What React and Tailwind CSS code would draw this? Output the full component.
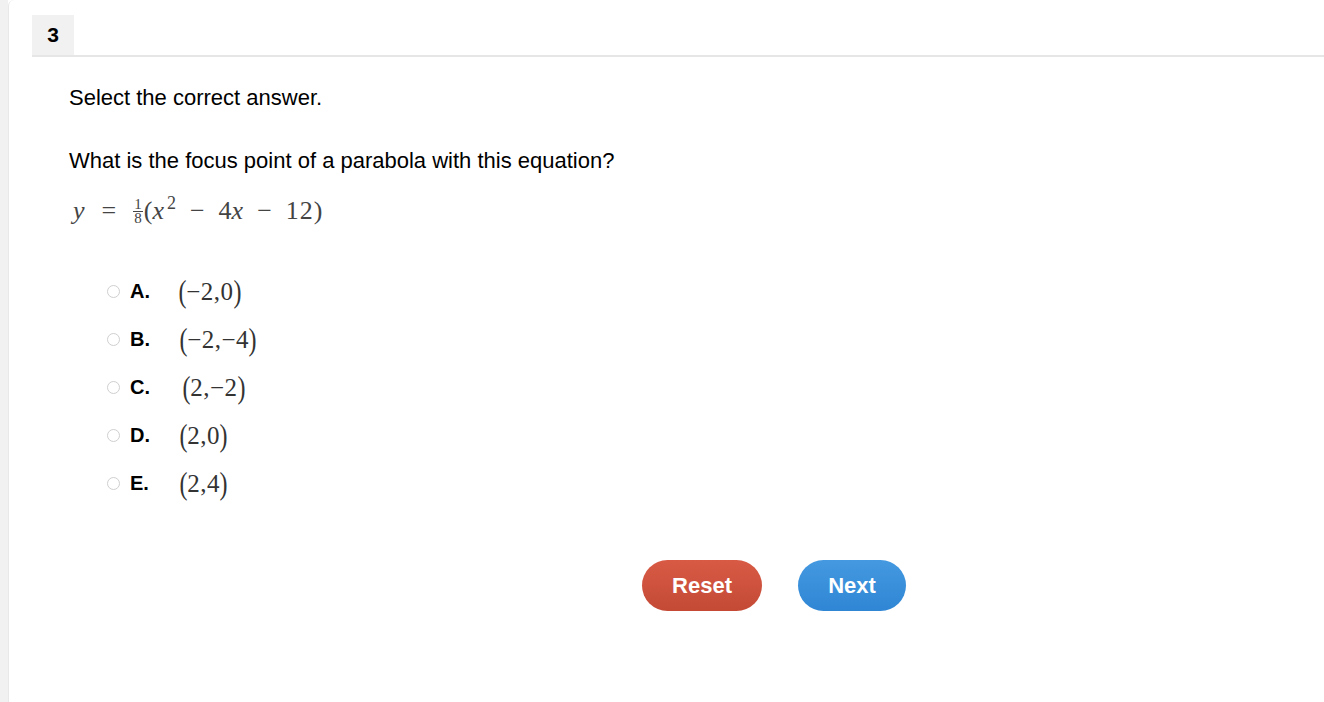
const options = [
    { letter: "A.", value: "(−2,0)", pad: "pl-[27px]" },
    { letter: "B.", value: "(−2,−4)", pad: "pl-[28px]" },
    { letter: "C.", value: "(2,−2)", pad: "pl-[31px]" },
    { letter: "D.", value: "(2,0)", pad: "pl-[28px]" },
    { letter: "E.", value: "(2,4)", pad: "pl-[28px]" },
];

function MathPoint({ value }) {
    // tách ngoặc để vẽ cao hơn chữ số
    const inner = value.slice(1, -1);
    return (
        <span className="flex items-center font-['Liberation_Serif',serif] text-[#333] text-[25px] leading-none tracking-[0.5px]">
            <span className="text-[32px] font-light scale-x-75 -mx-[2px]">(</span>
            <span>{inner}</span>
            <span className="text-[32px] font-light scale-x-75 -mx-[2px]">)</span>
        </span>
    );
}

function Option({ letter, value, pad }) {
    return (
        <label className="flex items-center h-[48px]">
            <span className="w-[13px] h-[13px] rounded-full border border-[#cfcfcf] bg-white" />
            <span className="ml-[10px] w-[22px] font-bold text-[20px] text-black">
                {letter}
            </span>
            <span className={pad}>
                <MathPoint value={value} />
            </span>
        </label>
    );
}

export default function App() {
    return (
        <div className="flex min-h-[702px] bg-white font-['Liberation_Sans',Arial,sans-serif]">
            {/* Thanh xám bên trái */}
            <div className="w-[8px] bg-[#f1f1f1]" />

            <div className="flex-1 bg-white border-l border-[#e8e8e8] rounded-tl-[6px] pt-[15px] pl-[23px]">
                {/* Tab số câu hỏi */}
                <div className="flex border-b-2 border-[#e6e6e6]">
                    <div className="w-[42px] h-[40px] bg-[#f1f1f1] flex items-center justify-center font-bold text-[21px] text-black">
                        3
                    </div>
                </div>

                <div className="pl-[37px] pt-[27px]">
                    <p className="text-[22px] leading-[28px] text-black">
                        Select the correct answer.
                    </p>
                    <p className="mt-[35px] text-[22px] leading-[28px] text-black">
                        What is the focus point of a parabola with this equation?
                    </p>

                    {/* Phương trình */}
                    <div className="mt-[18px] pl-[4px] flex items-center font-['Liberation_Serif',serif] text-[26px] text-[#444] leading-none h-[36px]">
                        <span className="italic">y</span>
                        <span className="mx-[17px]">=</span>
                        <span className="inline-flex flex-col items-center text-[15px] leading-[13px] mr-[1px]">
                            <span>1</span>
                            <span className="border-t border-[#444] px-[1px]">8</span>
                        </span>
                        <span>(</span>
                        <span className="italic">x</span>
                        <span className="text-[18px] self-start mt-[1px] ml-[3px]">2</span>
                        <span className="mx-[14px]">−</span>
                        <span>4</span>
                        <span className="italic">x</span>
                        <span className="mx-[14px]">−</span>
                        <span className="tracking-[1px]">12)</span>
                    </div>

                    {/* Các lựa chọn */}
                    <div className="mt-[38px] pl-[38px]">
                        {options.map((o) => (
                            <Option key={o.letter} {...o} />
                        ))}
                    </div>

                    {/* Nút */}
                    <div className="mt-[53px] flex pl-[573px] gap-[36px]">
                        <button className="w-[120px] h-[51px] rounded-full bg-gradient-to-b from-[#d85a45] to-[#c44a36] text-white font-bold text-[22px]">
                            Reset
                        </button>
                        <button className="w-[108px] h-[51px] rounded-full bg-gradient-to-b from-[#4499e0] to-[#2f86d4] text-white font-bold text-[22px]">
                            Next
                        </button>
                    </div>
                </div>
            </div>
        </div>
    );
}
